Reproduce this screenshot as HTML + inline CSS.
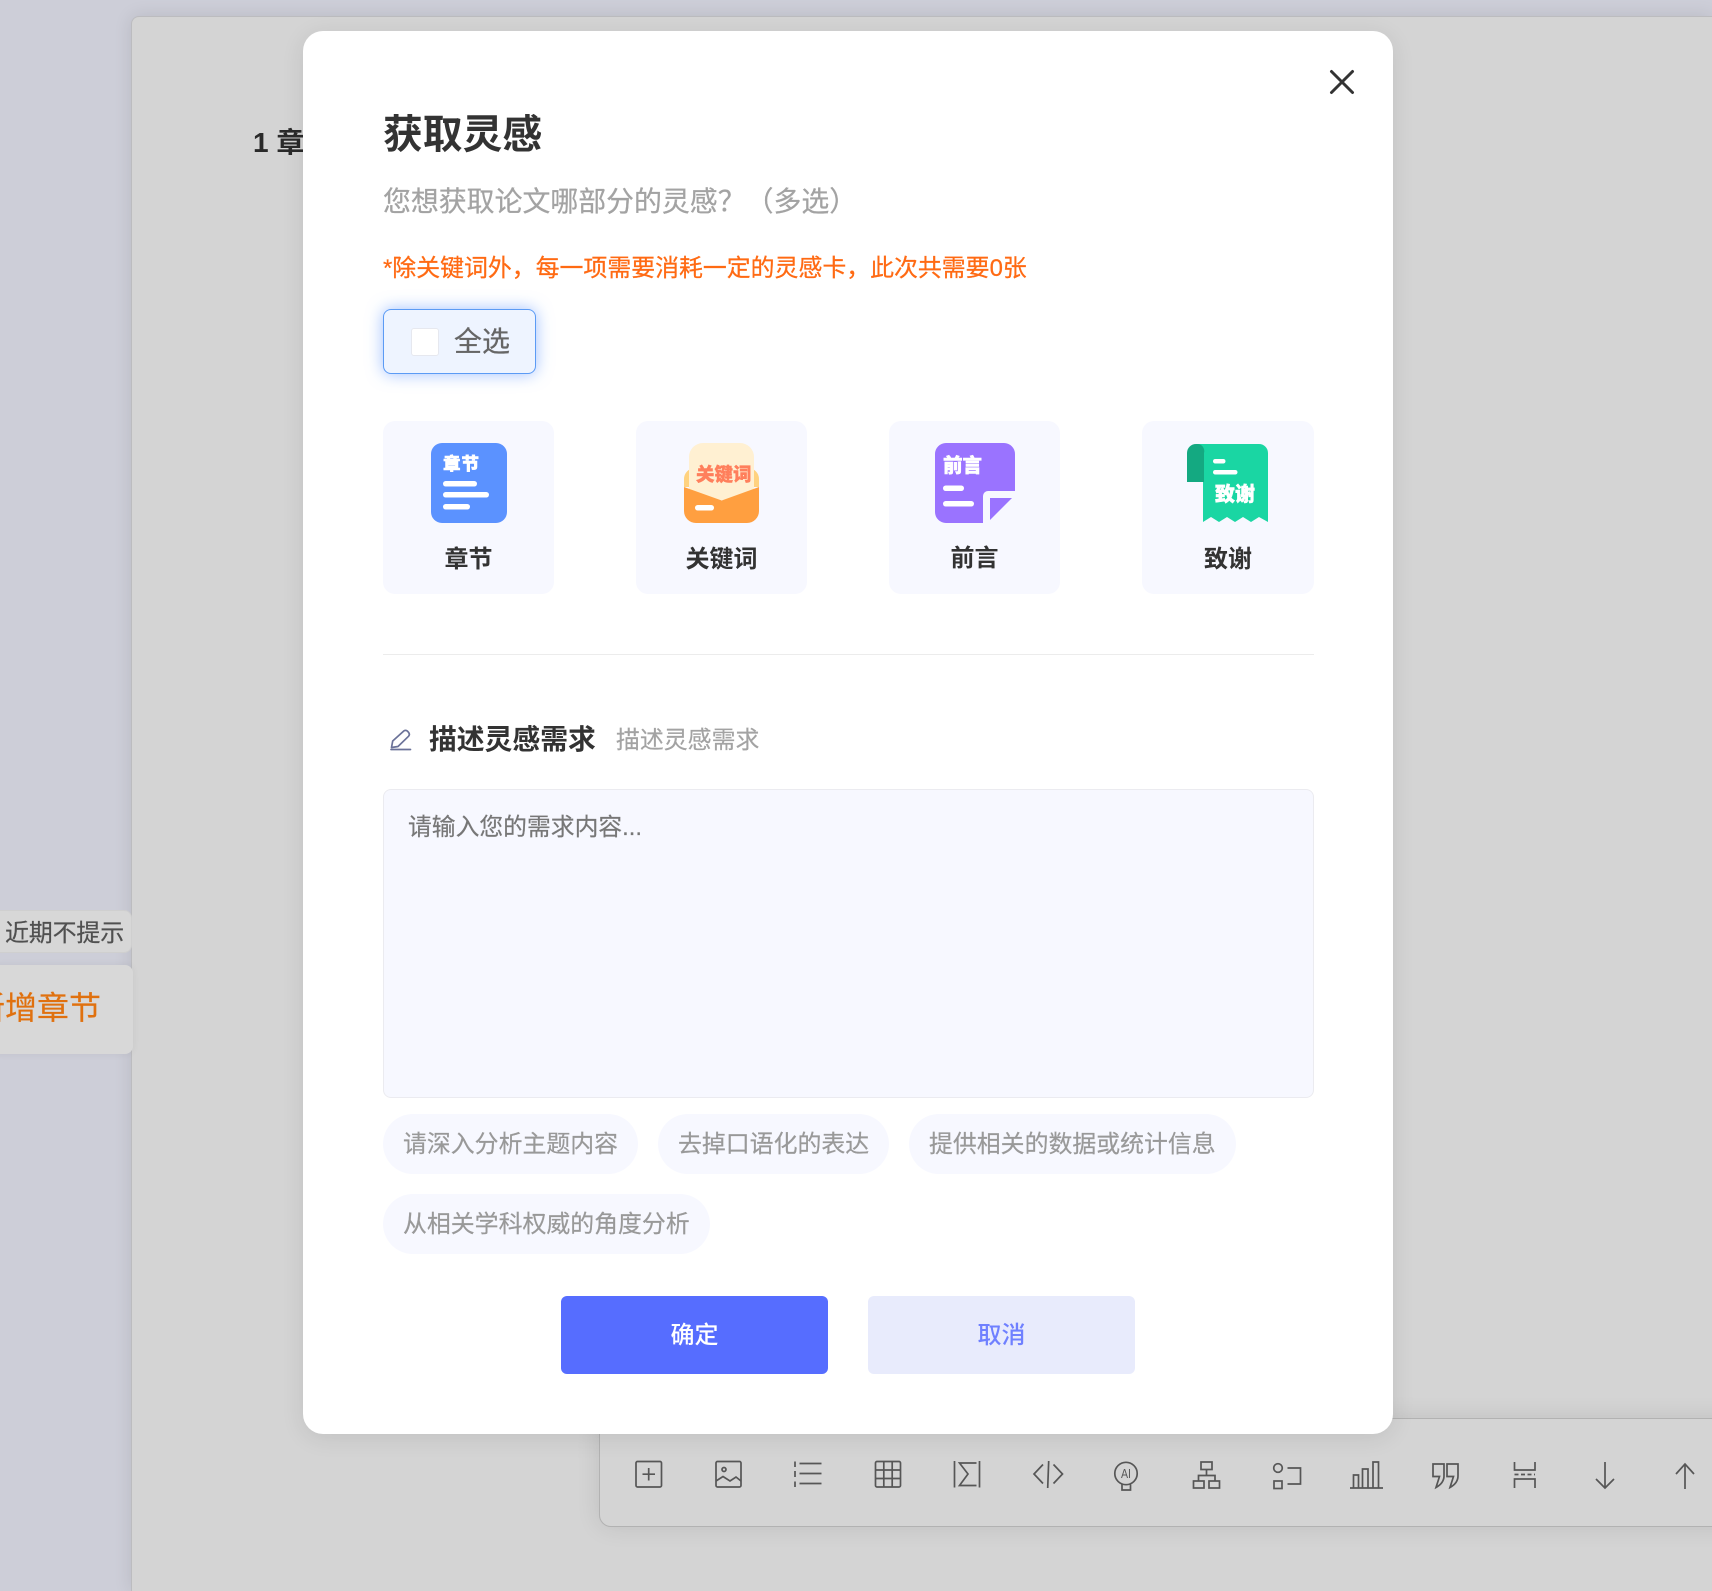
<!DOCTYPE html>
<html lang="zh">
<head>
<meta charset="utf-8">
<title>获取灵感</title>
<style>
html,body{margin:0;padding:0;width:1712px;height:1591px;overflow:hidden}
body{font-family:"Liberation Sans","Noto Sans CJK SC",sans-serif;background:#cdced8}
#wrap{position:absolute;left:0;top:0;width:1712px;height:1591px;overflow:hidden;background:#cdced8}
div{box-sizing:border-box}
.a{position:absolute;white-space:nowrap}
.card{position:absolute;top:421px;width:171px;height:173px;background:#f7f8ff;border-radius:12px}
.lab{position:absolute;top:540px;height:40px;line-height:40px;width:171px;text-align:center;font-size:24px;font-weight:700;color:#333}
.chip{position:absolute;height:60px;line-height:62px;background:#f7f8ff;border-radius:30px;padding:0 0 0 20px;font-size:23.9px;color:#999;white-space:nowrap;-webkit-text-stroke:.2px #999}
</style>
</head>
<body>
<div id="wrap">
<!-- background page panel -->
<div class="a" style="left:131px;top:16px;width:1581px;height:1575px;background:#d4d4d4;border:1px solid #bcbcbf;border-right:0;border-bottom:0;border-radius:8px 0 0 0;box-shadow:0 0 18px rgba(0,0,0,.1)"></div>
<div class="a" style="left:253px;top:122px;font-size:28px;line-height:42px;font-weight:700;color:#2a2a2a">1 章</div>

<!-- left popups -->
<div class="a" style="left:-10px;top:910px;width:142px;height:43px;background:#d7d7d7;border:1px solid #cfcfcf;border-radius:8px"></div>
<div class="a" style="left:5px;top:917px;font-size:24px;line-height:34px;color:#505050;letter-spacing:-.2px;-webkit-text-stroke:.2px #505050">近期不提示</div>
<div class="a" style="left:-10px;top:965px;width:143px;height:89px;background:#d8d8d8;border-radius:8px;box-shadow:0 0 8px rgba(0,0,0,.06)"></div>
<div class="a" style="left:-27px;top:985px;font-size:32px;line-height:46px;color:#e0710f;-webkit-text-stroke:.2px #e0710f">新增章节</div>

<!-- toolbar -->
<div class="a" style="left:599px;top:1418px;width:1200px;height:109px;background:#d4d4d4;border:1px solid #b2b2b2;border-radius:0 0 0 12px;box-shadow:0 0 24px rgba(0,0,0,.1)"></div>
<svg class="a" style="left:0;top:0" width="1712" height="1591" viewBox="0 0 1712 1591" fill="none" stroke="#565656" stroke-width="1.7">
  <rect x="636" y="1461.5" width="25.5" height="25.5" rx="1.5"/><path d="M642.5 1474.2h12.5M648.7 1468v12.500"/>
  <rect x="716" y="1461.5" width="25" height="25.5" rx="1.5"/><circle cx="724" cy="1469.5" r="2"/><path d="M716 1481l7-4.5 7 4.5 6-4 5 4"/>
  <path d="M795 1461.5v5.5M795 1471v6M795 1481.5v5.5M799.5 1463.500h22M799.5 1473.500h22M799.5 1483.500h22"/>
  <rect x="875.5" y="1461.5" width="25" height="25.5" rx="1.5"/><path d="M883.8 1461.5v25.5M892.2 1461.5v25.5M875.5 1470h25M875.5 1478.5h25"/>
  <path d="M954.5 1461v26.5M979.5 1461v26.5M976.5 1463H959.5l8.5 11-8.5 11.5h17"/>
  <path d="M1043 1464.5l-9 9.5 9 9.500M1053.5 1464.5l9 9.5-9 9.500M1048.7 1461l-1 27"/>
  <circle cx="1126" cy="1473.5" r="11.2"/><path d="M1122 1484.5v5.5h8.5v-5.5"/>
  <text x="1126" y="1478" text-anchor="middle" font-size="12.500" textLength="10" lengthAdjust="spacingAndGlyphs" font-family="Liberation Sans,sans-serif" fill="#565656" stroke="none">AI</text>
  <rect x="1201" y="1462" width="11" height="7.5"/><path d="M1206.5 1469.5v6M1198.5 1481v-5.5h16.5v5.500"/><rect x="1193.5" y="1481" width="10.500" height="7"/><rect x="1209" y="1481" width="10.500" height="7"/>
  <circle cx="1278" cy="1468" r="4.300"/><rect x="1274" y="1481" width="8" height="7.500"/><path d="M1287.5 1468h13v16h-13"/>
  <path d="M1350 1488h33M1353.500 1488v-13h5v13M1362.500 1488v-19h5.500v19M1373 1488v-26h5.500v26" />
  <path d="M1433 1464h11v12q0 7-8 11.500l3.500-11h-6.500zM1447 1464h11v12q0 7-8 11.500l3.500-11h-6.500z"/>
  <path d="M1514.500 1462v8h20.500v-8M1514.500 1488v-9h20.500v9"/><path d="M1514.500 1474.500h20.500" stroke-dasharray="4 2.500"/>
  <path d="M1605 1462v26M1596 1479l9 9 9-9"/>
  <path d="M1685 1464v25M1676 1474l9-10 9 10"/>
</svg>

<!-- modal -->
<div class="a" style="left:303px;top:31px;width:1090px;height:1403px;background:#fff;border-radius:20px;box-shadow:0 4px 24px rgba(0,0,0,.09)"></div>
<svg class="a" style="left:1325px;top:65px" width="34" height="34" fill="none" stroke="#333" stroke-width="3" stroke-linecap="round"><path d="M6.500 6.500l21 21M27.500 6.500l-21 21"/></svg>

<div class="a" style="left:383px;top:107px;font-size:39.800px;line-height:56px;font-weight:700;color:#333">获取灵感</div>
<div class="a" style="left:383px;top:182px;font-size:27.900px;line-height:40px;color:#a3a3a3;-webkit-text-stroke:.25px #a3a3a3">您想获取论文哪部分的灵感？（多选）</div>
<div class="a" style="left:383px;top:252px;font-size:23.900px;line-height:34px;color:#ff6a13;-webkit-text-stroke:.25px #ff6a13">*除关键词外，每一项需要消耗一定的灵感卡，此次共需要0张</div>

<div class="a" style="left:383px;top:309px;width:153px;height:65px;background:#eef4ff;border:1px solid #5b9bf5;border-radius:8px;box-shadow:0 0 16px rgba(80,140,255,.55)"></div>
<div class="a" style="left:411px;top:328px;width:28px;height:28px;background:#fff;border:1px solid #e6e8ef;border-radius:3px"></div>
<div class="a" style="left:454px;top:322px;font-size:28px;line-height:40px;color:#666;-webkit-text-stroke:.25px #666">全选</div>

<!-- cards -->
<div class="card" style="left:383px"></div>
<div class="card" style="left:636px"></div>
<div class="card" style="left:889px"></div>
<div class="card" style="left:1142px;width:172px"></div>
<div class="lab" style="left:383px">章节</div>
<div class="lab" style="left:636px">关键词</div>
<div class="lab" style="left:889px;top:539px">前言</div>
<div class="lab" style="left:1142px;width:172px">致谢</div>

<svg class="a" style="left:0;top:0" width="1712" height="700" viewBox="0 0 1712 700" font-family="Liberation Sans,Noto Sans CJK SC,sans-serif" font-weight="900">
  <!-- blue -->
  <rect x="431" y="443" width="76" height="80" rx="11" fill="#5b92ff"/>
  <text x="443" y="470" font-size="17.500" fill="#fff" letter-spacing="1" stroke="#fff" stroke-width=".5">章节</text>
  <rect x="443" y="481" width="34" height="5.500" rx="2.700" fill="#fff"/>
  <rect x="443" y="492" width="46" height="5.500" rx="2.700" fill="#fff"/>
  <rect x="443" y="504" width="27" height="5.500" rx="2.700" fill="#fff"/>
  <!-- orange -->
  <path d="M684 487v-8a11 11 0 0 1 11-11h53a11 11 0 0 1 11 11v8z" fill="#ffd27f"/>
  <path d="M689 500V457a14 14 0 0 1 14-14h37a14 14 0 0 1 14 14v43z" fill="#fff0d2"/>
  <text x="696" y="481" font-size="18.500" fill="#ff7f5c" stroke="#ff7f5c" stroke-width=".4">关键词</text>
  <path d="M684 487l37.700 13.500L759 487v24a12 12 0 0 1-12 12h-51a12 12 0 0 1-12-12z" fill="#ff9f40"/>
  <rect x="695" y="505" width="19" height="5.500" rx="2.700" fill="#fff"/>
  <!-- purple -->
  <path d="M946 443h58a11 11 0 0 1 11 11v37h-27a5 5 0 0 0-5 5v27h-37a11 11 0 0 1-11-11v-58a11 11 0 0 1 11-11z" fill="#9a73ff"/>
  <path d="M990 498h22l-22 22z" fill="#9a73ff"/>
  <text x="943" y="472" font-size="19.500" fill="#fff" stroke="#fff" stroke-width=".5">前言</text>
  <rect x="943" y="485.500" width="21" height="5.500" rx="2.700" fill="#fff"/>
  <rect x="943" y="501" width="31" height="5.500" rx="2.700" fill="#fff"/>
  <!-- green -->
  <path d="M1196 444h63a9 9 0 0 1 9 9v69l-9-5-8 5-8-5-8 5-8-5-8 5-8-5-8 5V453z" fill="#1ad6a3"/>
  <path d="M1187 482v-29a9 9 0 0 1 9-9h1a7 7 0 0 1 7 9v29z" fill="#14a981"/>
  <rect x="1213" y="459" width="12.500" height="4.500" rx="2.200" fill="#fff"/>
  <rect x="1213" y="470" width="24.500" height="4.500" rx="2.200" fill="#fff"/>
  <text x="1215" y="501" font-size="20" fill="#fff" stroke="#fff" stroke-width=".5">致谢</text>
</svg>

<div class="a" style="left:383px;top:654px;width:931px;height:1px;background:#ececec"></div>

<!-- section -->
<svg class="a" style="left:387px;top:727px" width="28" height="28" fill="none" stroke="#6b7299" stroke-width="1.700" stroke-linecap="round" stroke-linejoin="round"><path d="M4.500 20.500l1.200-6.500L16.500 4.200q2-1.700 4 0l1 1.100q1.700 2 0 4L11 19.500zM4 22.500h19.500"/></svg>
<div class="a" style="left:429px;top:720px;font-size:27.800px;line-height:40px;font-weight:700;color:#333">描述灵感需求</div>
<div class="a" style="left:616px;top:724px;font-size:23.900px;line-height:34px;color:#a3a3a3;-webkit-text-stroke:.2px #a3a3a3">描述灵感需求</div>

<div class="a" style="left:383px;top:789px;width:931px;height:309px;background:#f7f8ff;border:1px solid #ebebf0;border-radius:8px"></div>
<div class="a" style="left:408px;top:811px;font-size:23.800px;line-height:34px;color:#777;-webkit-text-stroke:.2px #777">请输入您的需求内容...</div>

<div class="chip" style="left:383px;top:1114px;width:255px">请深入分析主题内容</div>
<div class="chip" style="left:658px;top:1114px;width:231px">去掉口语化的表达</div>
<div class="chip" style="left:909px;top:1114px;width:327px">提供相关的数据或统计信息</div>
<div class="chip" style="left:383px;top:1194px;width:327px">从相关学科权威的角度分析</div>

<div class="a" style="left:561px;top:1296px;width:267px;height:78px;line-height:80px;text-align:center;background:#566dff;border-radius:6px;color:#fff;font-size:24px;font-weight:500">确定</div>
<div class="a" style="left:868px;top:1296px;width:267px;height:78px;line-height:80px;text-align:center;background:#e8ebfc;border-radius:6px;color:#6f80ff;font-size:24px;font-weight:500">取消</div>
</div>
</body>
</html>
